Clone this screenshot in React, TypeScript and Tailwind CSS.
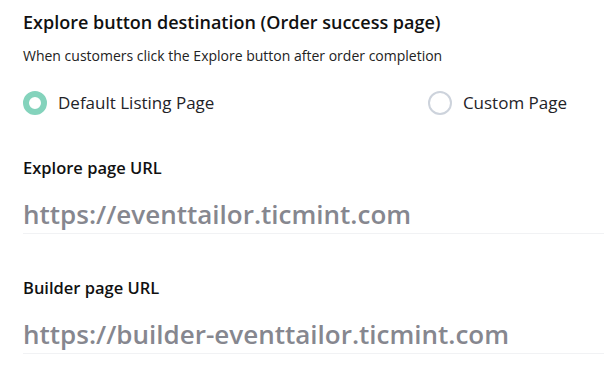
import { useState } from "react";

// Radio option
const Radio = ({ label, checked, onClick }: { label: string; checked: boolean; onClick: () => void }) => (
    <button onClick={onClick} className="flex items-center gap-[11px] text-[17px] leading-[24px] text-[#1f2328]">
        <span
            className={`block w-[24px] h-[24px] rounded-full bg-white ${
                checked ? "border-[6px] border-[#84d3bc]" : "border-2 border-[#cdd3dc]"
            }`}
        ></span>
        {label}
    </button>
);

const UrlField = ({ label, value }: { label: string; value: string }) => (
    <div className="flex flex-col">
        <label className="text-[16.5px] leading-[20px] font-semibold text-[#111]">{label}</label>
        <input
            readOnly
            value={value}
            className="mt-[16px] h-[40px] text-[26px] font-semibold text-[#86878f] outline-none border-b border-[#f1f2f4] bg-transparent w-full"
        />
    </div>
);

export default function App() {
    const [choice, setChoice] = useState<"default" | "custom">("default");

    return (
        <div className="w-[604px] h-[372px] bg-white pl-[23px] pt-[10px]" style={{ fontFamily: '"Open Sans", sans-serif' }}>
            <h2 className="text-[18px] leading-[24px] font-semibold text-[#111]">Explore button destination (Order success page)</h2>
            <p className="mt-[12px] text-[14px] leading-[20px] text-[#222]">When customers click the Explore button after order completion</p>

            <div className="mt-[25px] flex items-center justify-between pr-[37px]">
                <Radio label="Default Listing Page" checked={choice === "default"} onClick={() => setChoice("default")} />
                <Radio label="Custom Page" checked={choice === "custom"} onClick={() => setChoice("custom")} />
            </div>

            <div className="mt-[43px] flex flex-col gap-[44px]">
                <UrlField label="Explore page URL" value="https://eventtailor.ticmint.com" />
                <UrlField label="Builder page URL" value="https://builder-eventtailor.ticmint.com" />
            </div>
        </div>
    );
}
